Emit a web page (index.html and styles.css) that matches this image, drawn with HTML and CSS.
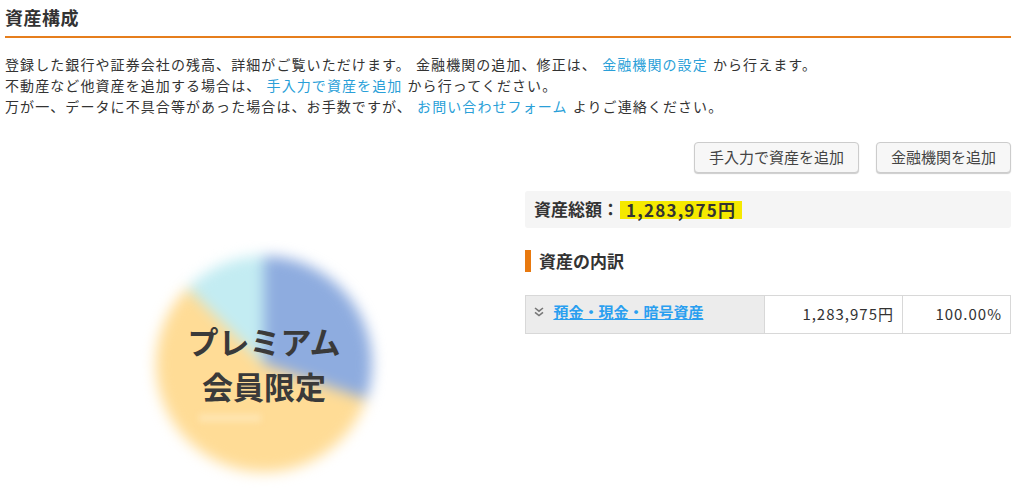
FILE: index.html
```html
<!DOCTYPE html>
<html lang="ja">
<head>
<meta charset="utf-8">
<title>資産構成</title>
<link rel="stylesheet" href="styles.css">
</head>
<body>
<main class="page">
  <h1 class="title">資産構成</h1>
  <p class="intro">
    登録した銀行や証券会社の残高、詳細がご覧いただけます。 金融機関の追加、修正は、 <a href="#">金融機関の設定</a> から行えます。<br>
    不動産など他資産を追加する場合は、 <a href="#">手入力で資産を追加</a> から行ってください。<br>
    万が一、データに不具合等があった場合は、お手数ですが、 <a href="#">お問い合わせフォーム</a> よりご連絡ください。
  </p>
  <div class="actions">
    <button class="btn btn-manual">手入力で資産を追加</button>
    <button class="btn btn-bank">金融機関を追加</button>
  </div>
  <div class="content">
    <div class="chart-col">
      <div class="pie-wrap">
        <div class="pie"></div>
        <div class="pie-mark"></div>
        <div class="pie-label">プレミアム<br>会員限定</div>
      </div>
    </div>
    <div class="detail-col">
      <div class="total">資産総額：<span class="total-value">1,283,975円</span></div>
      <h2 class="subhead">資産の内訳</h2>
      <table class="breakdown">
        <tr>
          <th>
            <svg class="chev" width="10" height="10" viewBox="0 0 10 10" aria-hidden="true"><path d="M1 1l4 3.2L9 1M1 5.4l4 3.2 4-3.2" fill="none" stroke="#777" stroke-width="1.6"/></svg>
            <a href="#">預金・現金・暗号資産</a>
          </th>
          <td class="amount">1,283,975円</td>
          <td class="pct">100.00%</td>
        </tr>
      </table>
    </div>
  </div>
</main>
</body>
</html>
```
FILE: styles.css
```css
* { box-sizing: border-box; }
html, body { margin: 0; padding: 0; background: #fff; }
body {
  font-family: "Noto Sans CJK JP", "Noto Sans", sans-serif;
  font-size: 14px;
  color: #333;
  height: 490px;
  overflow: hidden;
}
.page { width: 1006px; margin-left: 5px; }
.title {
  margin: 0;
  height: 38px;
  padding-top: 5px;
  font-size: 18px;
  line-height: 24px;
  letter-spacing: 0.5px;
  font-weight: 700;
  border-bottom: 2px solid #e67e1c;
}
.intro {
  margin: 16px 0 0;
  font-size: 14px;
  line-height: 21px;
  letter-spacing: 1.08px;
  word-spacing: 1px;
  white-space: nowrap;
}
a { color: #2a9fd8; text-decoration: none; }
.actions {
  display: flex;
  justify-content: flex-end;
  gap: 17px;
  margin-top: 25px;
}
.btn {
  height: 31px;
  padding: 0 0 3px;
  font: inherit;
  font-size: 15px;
  color: #444;
  background: #f7f7f7;
  border: 1px solid #ccc;
  border-radius: 4px;
  box-shadow: 0 1px 1px #ccc;
}
.btn-manual { width: 165px; }
.btn-bank { width: 135px; }
.content { display: flex; margin-top: 18px; }
.chart-col { width: 520px; }
.pie-wrap {
  position: relative;
  width: 230px;
  height: 230px;
  margin: 58px 0 0 144px;
}
.pie {
  position: absolute;
  inset: 7px;
  border-radius: 50%;
  background: conic-gradient(#8eacdf 0deg 109deg, #ffdc96 109deg 315deg, #c3ecf2 315deg 360deg);
  filter: blur(7px);
}
.pie-mark {
  position: absolute;
  left: 50px;
  top: 165px;
  width: 62px;
  height: 8px;
  background: #ffe5b0;
  filter: blur(3px);
}
.pie-label {
  position: absolute;
  inset: 0;
  padding-top: 69px;
  text-align: center;
  font-size: 31px;
  line-height: 45px;
  font-weight: 700;
  color: #3a3a3a;
}
.detail-col { width: 486px; }
.total {
  height: 37px;
  padding-left: 9px;
  font-size: 17px;
  line-height: 36px;
  font-weight: 700;
  background: #f5f5f5;
  border-radius: 3px;
}
.total-value {
  display: inline-block;
  height: 18px;
  margin-left: 1px;
  padding: 0 6px;
  line-height: 18px;
  vertical-align: -1px;
  background: #f5e900;
  letter-spacing: 1.2px;
}
.subhead {
  margin: 22px 0 0;
  height: 22px;
  padding-left: 8px;
  font-size: 17px;
  line-height: 22px;
  font-weight: 700;
  border-left: 6px solid #e8790f;
}
.breakdown {
  width: 100%;
  margin-top: 23px;
  border-collapse: collapse;
  table-layout: fixed;
  height: 39px;
}
.breakdown th, .breakdown td {
  border: 1px solid #d8d8d8;
  padding: 0 8px 2px;
  font-size: 15px;
}
.breakdown th {
  width: 239px;
  background: #ececec;
  text-align: left;
  font-weight: 700;
  white-space: nowrap;
  padding-bottom: 6px;
}
.breakdown th a { color: #2a9ff0; text-decoration: underline; margin-left: 6px; }
.chev { vertical-align: 1px; }
.breakdown td { text-align: right; letter-spacing: 1px; }
.amount { width: 138px; }
```
